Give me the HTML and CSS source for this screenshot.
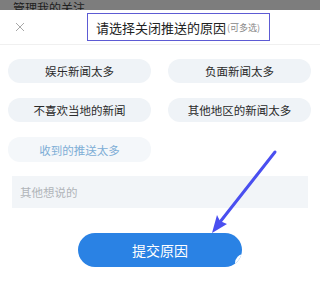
FILE: index.html
```html
<!DOCTYPE html>
<html lang="zh">
<head>
  <meta charset="UTF-8">
  <title>关闭推送</title>
  <link rel="stylesheet" href="styles.css">
</head>
<body>
  <div class="topbar"><span>管理我的关注</span></div>

  <div class="header">
    <span class="close">
      <svg width="10" height="10" viewBox="0 0 10 10"><path d="M1 1L9 9M9 1L1 9" stroke="#a8a8a8" stroke-width="1"/></svg>
    </span>
    <div class="title">请选择关闭推送的原因<small>(可多选)</small></div>
  </div>

  <div class="reasons">
    <button class="reason">娱乐新闻太多</button>
    <button class="reason">负面新闻太多</button>
    <button class="reason">不喜欢当地的新闻</button>
    <button class="reason">其他地区的新闻太多</button>
    <button class="reason faded">收到的推送太多</button>
  </div>

  <div class="note">其他想说的</div>

  <div class="actions">
    <button class="submit">提交原因</button>
  </div>

  <svg class="arrow" width="320" height="292" viewBox="0 0 320 292">
    <line x1="275" y1="152" x2="220" y2="222" stroke="#4a4ff0" stroke-width="3" stroke-linecap="round"/>
    <polygon points="212,233 227,224 220,221 217,215" fill="#4a4ff0"/>
  </svg>
</body>
</html>
```

FILE: styles.css
```css
body {
  margin: 0;
  width: 320px;
  height: 292px;
  overflow: hidden;
  background: #fff;
  font-family: "Noto Sans CJK SC", "Noto Sans", sans-serif;
  position: relative;
}

.topbar {
  height: 10px;
  background: #7d7d7d;
  overflow: hidden;
  padding-left: 13px;
}

.topbar span {
  display: block;
  font-size: 12px;
  line-height: 12px;
  margin-top: 2px;
  color: #1e1e1e;
}

.header {
  height: 35px;
  border-bottom: 1px solid #f0f0f0;
  display: flex;
  align-items: center;
  box-sizing: border-box;
}

.close {
  width: 10px;
  height: 10px;
  margin-left: 15px;
  display: flex;
}

.title {
  margin-left: 62px;
  width: 183px;
  height: 28px;
  box-sizing: border-box;
  border: 1.5px solid #5d5bd4;
  display: flex;
  align-items: center;
  padding-left: 8px;
  font-size: 13px;
  color: #222;
  white-space: nowrap;
}

.title small {
  font-size: 9px;
  color: #888;
  margin-left: 1px;
}

.reasons {
  display: grid;
  grid-template-columns: 143px 143px;
  column-gap: 17px;
  row-gap: 15px;
  padding: 14px 9px 0 8px;
}

.reason {
  height: 24px;
  border: none;
  border-radius: 12px;
  background: #eff3f7;
  font-family: inherit;
  font-size: 11.5px;
  color: #2a2a2a;
  padding: 0;
}

.reason.faded {
  background: #f4f7fa;
  color: #7eaed6;
  height: 25px;
}

.note {
  margin: 14px 12px 0 12px;
  height: 32px;
  background: #f2f5f8;
  font-size: 11.5px;
  color: #b0b4b9;
  padding-left: 8px;
  line-height: 32px;
}

.actions {
  display: flex;
  justify-content: center;
  margin-top: 25px;
}

.submit {
  position: relative;
  overflow: hidden;
  width: 164px;
  height: 34px;
  border: none;
  border-radius: 17px;
  background: #2a82e4;
  color: #fff;
  font-family: inherit;
  font-size: 14px;
  padding: 0;
}

.submit::after {
  content: "";
  position: absolute;
  right: -11px;
  bottom: -5px;
  width: 18px;
  height: 18px;
  border-radius: 50%;
  background: #fff;
}

.arrow {
  position: absolute;
  left: 0;
  top: 0;
  pointer-events: none;
}
```
